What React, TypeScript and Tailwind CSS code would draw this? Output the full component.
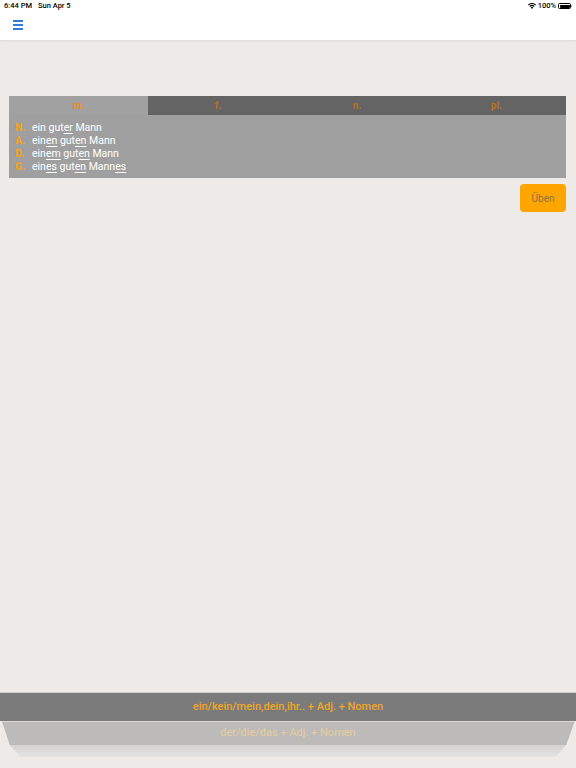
import React from 'react';

type Part = { t: string; u?: boolean };

const rows: { c: string; parts: Part[] }[] = [
  { c: 'N.', parts: [{ t: 'ein gut' }, { t: 'er', u: true }, { t: ' Mann' }] },
  { c: 'A.', parts: [{ t: 'ein' }, { t: 'en', u: true }, { t: ' gut' }, { t: 'en', u: true }, { t: ' Mann' }] },
  { c: 'D.', parts: [{ t: 'ein' }, { t: 'em', u: true }, { t: ' gut' }, { t: 'en', u: true }, { t: ' Mann' }] },
  { c: 'G.', parts: [{ t: 'ein' }, { t: 'es', u: true }, { t: ' gut' }, { t: 'en', u: true }, { t: ' Mann' }, { t: 'es', u: true }] },
];

const tabs = ['m.', 'f.', 'n.', 'pl.'];

function StatusBar() {
  return (
    <div className="flex h-[12px] items-center justify-between px-[4px] text-[7.5px] font-medium text-black">
      <div className="flex gap-[6px]">
        <span>6:44 PM</span>
        <span>Sun Apr 5</span>
      </div>
      <div className="flex items-center gap-[2px]">
        {/* wifi */}
        <svg width="8" height="6" viewBox="0 0 16 12">
          <path d="M8 12 L5.5 9 A3.5 3.5 0 0 1 10.5 9 Z" fill="#000" />
          <path d="M2.8 6.2 A7.5 7.5 0 0 1 13.2 6.2 L11.7 7.8 A5.3 5.3 0 0 0 4.3 7.8 Z" fill="#000" />
          <path d="M0 3.2 A11.5 11.5 0 0 1 16 3.2 L14.5 4.8 A9.3 9.3 0 0 0 1.5 4.8 Z" fill="#000" />
        </svg>
        <span>100%</span>
        <div className="flex items-center">
          <div className="h-[6px] w-[13px] rounded-[1.5px] border-[0.5px] border-black p-[0.5px]">
            <div className="h-full w-full rounded-[1px] bg-black" />
          </div>
          <div className="h-[2px] w-[1px] rounded-r-[1px] bg-black/50" />
        </div>
      </div>
    </div>
  );
}

export default function App() {
  return (
    <div
      className="flex h-[768px] w-[576px] flex-col overflow-hidden bg-[#edeae8]"
      style={{ fontFamily: 'Roboto, "Liberation Sans", sans-serif' }}
    >
      {/* Header */}
      <div className="h-[40px] bg-white shadow-[0_1px_2px_rgba(0,0,0,0.08)]">
        <StatusBar />
        <div className="flex h-[26px] items-center px-[13px]">
          <div className="flex w-[10px] flex-col gap-[2.5px]">
            <div className="h-[1.5px] bg-[#2f7bd9]" />
            <div className="h-[1.5px] bg-[#2f7bd9]" />
            <div className="h-[1.5px] bg-[#2f7bd9]" />
          </div>
        </div>
      </div>

      {/* Declension table */}
      <div className="flex flex-col px-[9px] pr-[10px] pt-[56px]">
        <div className="flex flex-col">
          <div className="grid h-[19px] grid-cols-4 text-[10px] font-bold text-[#e6901c]">
            {tabs.map((t, i) => (
              <div
                key={t}
                className={
                  i === 0
                    ? 'flex items-center justify-center bg-[#a1a1a1]'
                    : 'flex items-center justify-center bg-[#646464] text-[#b8731e]'
                }
              >
                {t}
              </div>
            ))}
          </div>
          <div className="h-[63px] bg-[#9f9f9f] pl-[6px] pt-[6px] text-[10.5px] leading-[13px]">
            {rows.map((r) => (
              <div key={r.c} className="flex">
                <span className="w-[17px] font-bold text-[#f4a21c]">{r.c}</span>
                <span className="text-white">
                  {r.parts.map((p, i) =>
                    p.u ? (
                      <span key={i} className="underline decoration-[0.5px] underline-offset-[1.5px]">
                        {p.t}
                      </span>
                    ) : (
                      <span key={i}>{p.t}</span>
                    )
                  )}
                </span>
              </div>
            ))}
          </div>
        </div>
        <div className="mt-[6px] flex justify-end">
          <button className="h-[28px] w-[46px] rounded-[4px] bg-[#ffa500] text-[10px] text-[#8a7446]">
            Üben
          </button>
        </div>
      </div>

      {/* Bottom picker */}
      <div className="mt-auto flex flex-col pb-[11px]">
        <div className="flex h-[29px] items-center justify-center border-t border-[#cfcdcb] bg-[#7b7b7b] text-[11px] font-medium text-[#f0a526]">
          ein/kein/mein,dein,ihr.. + Adj. + Nomen
        </div>
        <div className="flex h-[24px] items-center justify-center border-t border-[#dedcda] bg-[#bdbbb9] text-[11px] text-[#e6cd9f] [clip-path:polygon(0.3%_0,99.8%_0,98.3%_100%,1.7%_100%)]">
          der/die/das + Adj. + Nomen
        </div>
        <div className="h-[12px] bg-gradient-to-b from-[#d5d3d1] to-[#e6e4e2] [clip-path:polygon(1.7%_0,98.3%_0,96.5%_100%,3.5%_100%)]" />
      </div>
    </div>
  );
}
